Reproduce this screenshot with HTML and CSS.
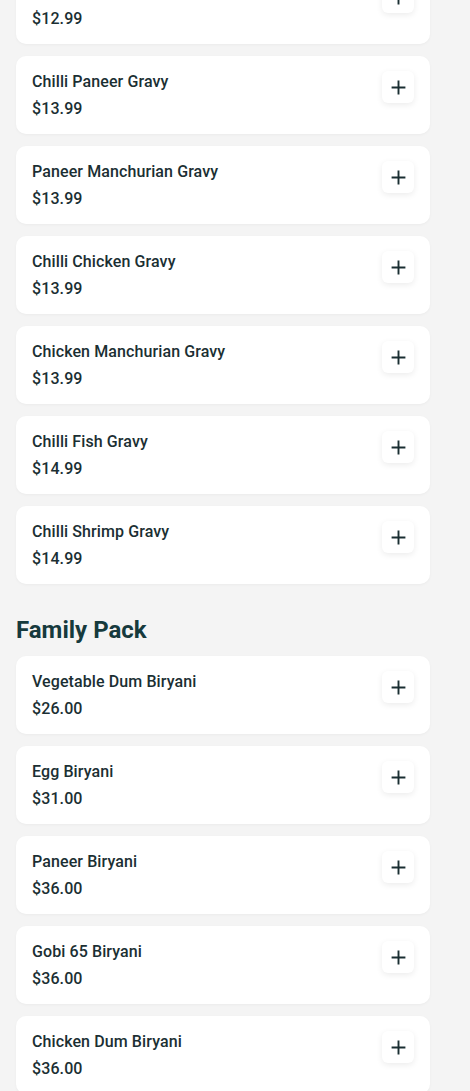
FILE: index.html
```html
<!DOCTYPE html>
<html lang="en">
<head>
  <meta charset="UTF-8" />
  <meta name="viewport" content="width=device-width, initial-scale=1.0"/>
  <title>Menu</title>
  <link rel="stylesheet" href="styles.css">
</head>
<body>

  <div class="menu">
    <div class="items">
      <div class="item"><div class="info"><div class="name">Gobi Manchurian Gravy</div><div class="price">$12.99</div></div><button class="add"><svg viewBox="0 0 16 16"><path d="M8 1.5v13M1.5 8h13"/></svg></button></div>
      <div class="item"><div class="info"><div class="name">Chilli Paneer Gravy</div><div class="price">$13.99</div></div><button class="add"><svg viewBox="0 0 16 16"><path d="M8 1.5v13M1.5 8h13"/></svg></button></div>
      <div class="item"><div class="info"><div class="name">Paneer Manchurian Gravy</div><div class="price">$13.99</div></div><button class="add"><svg viewBox="0 0 16 16"><path d="M8 1.5v13M1.5 8h13"/></svg></button></div>
      <div class="item"><div class="info"><div class="name">Chilli Chicken Gravy</div><div class="price">$13.99</div></div><button class="add"><svg viewBox="0 0 16 16"><path d="M8 1.5v13M1.5 8h13"/></svg></button></div>
      <div class="item"><div class="info"><div class="name">Chicken Manchurian Gravy</div><div class="price">$13.99</div></div><button class="add"><svg viewBox="0 0 16 16"><path d="M8 1.5v13M1.5 8h13"/></svg></button></div>
      <div class="item"><div class="info"><div class="name">Chilli Fish Gravy</div><div class="price">$14.99</div></div><button class="add"><svg viewBox="0 0 16 16"><path d="M8 1.5v13M1.5 8h13"/></svg></button></div>
      <div class="item"><div class="info"><div class="name">Chilli Shrimp Gravy</div><div class="price">$14.99</div></div><button class="add"><svg viewBox="0 0 16 16"><path d="M8 1.5v13M1.5 8h13"/></svg></button></div>
    </div>

    <h2 class="category">Family Pack</h2>
    <div class="items">
      <div class="item"><div class="info"><div class="name">Vegetable Dum Biryani</div><div class="price">$26.00</div></div><button class="add"><svg viewBox="0 0 16 16"><path d="M8 1.5v13M1.5 8h13"/></svg></button></div>
      <div class="item"><div class="info"><div class="name">Egg Biryani</div><div class="price">$31.00</div></div><button class="add"><svg viewBox="0 0 16 16"><path d="M8 1.5v13M1.5 8h13"/></svg></button></div>
      <div class="item"><div class="info"><div class="name">Paneer Biryani</div><div class="price">$36.00</div></div><button class="add"><svg viewBox="0 0 16 16"><path d="M8 1.5v13M1.5 8h13"/></svg></button></div>
      <div class="item"><div class="info"><div class="name">Gobi 65 Biryani</div><div class="price">$36.00</div></div><button class="add"><svg viewBox="0 0 16 16"><path d="M8 1.5v13M1.5 8h13"/></svg></button></div>
      <div class="item"><div class="info"><div class="name">Chicken Dum Biryani</div><div class="price">$36.00</div></div><button class="add"><svg viewBox="0 0 16 16"><path d="M8 1.5v13M1.5 8h13"/></svg></button></div>
    </div>
  </div>

</body>
</html>
```

FILE: styles.css
```css
* {
  box-sizing: border-box;
}

html, body {
  margin: 0;
  padding: 0;
  background: #f4f4f4;
  font-family: Roboto, "Liberation Sans", sans-serif;
  color: #1b2f33;
}

/* page is shown scrolled, first card cut off at the top */
.menu {
  width: 414px;
  margin: -34px 0 0 16px;
}

.items {
  display: flex;
  flex-direction: column;
  gap: 12px;
}

.item {
  display: flex;
  justify-content: space-between;
  align-items: flex-start;
  background: #fff;
  border-radius: 10px;
  padding: 16px 16px 15px;
  box-shadow: 0 1px 3px rgba(0, 0, 0, 0.04);
}

.info {
  display: flex;
  flex-direction: column;
  gap: 7px;
}

.name,
.price {
  font-size: 16px;
  line-height: 20px;
  font-weight: 500;
  letter-spacing: 0.1px;
}

.add {
  width: 32px;
  height: 32px;
  margin-top: -1px;
  border: none;
  border-radius: 6px;
  background: #fff;
  box-shadow: 0 2px 6px rgba(0, 0, 0, 0.08);
  display: flex;
  justify-content: center;
  align-items: center;
  padding: 0;
  cursor: pointer;
}

.add svg {
  width: 17px;
  height: 17px;
  stroke: #1a2e32;
  stroke-width: 1.8;
  fill: none;
}

.category {
  margin: 30px 0 10px;
  font-size: 24px;
  line-height: 32px;
  font-weight: 700;
  color: #163a3d;
}
```
